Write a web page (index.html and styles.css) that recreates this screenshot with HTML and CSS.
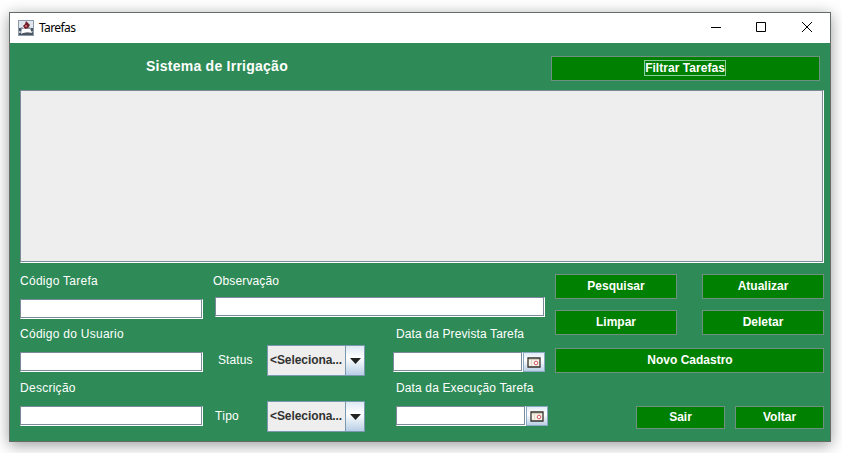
FILE: index.html
```html
<!DOCTYPE html>
<html lang="pt-BR">
<head>
<meta charset="utf-8">
<title>Tarefas</title>
<link rel="stylesheet" href="styles.css">
</head>
<body>
<div class="window">
  <header class="titlebar">
    <svg class="app-icon" width="16" height="16" viewBox="0 0 16 16">
      <rect x=".5" y=".5" width="15" height="15" fill="#dfe6ee" stroke="#8d9aaa"/>
      <path d="M1 9l3-2 2 2 5-2 4 2v3l-3 1H4l-3-2z" fill="#8a96a4"/>
      <path d="M1 8h2v3H1zM13 8h2v3h-2zM1 13l4-1 6 1 4-1v3H1z" fill="#4c5662"/>
      <path d="M4 9h8l2 4-4-1-5 1-2 1z" fill="#fff"/>
      <path d="M8 1l4 4-2 3-3 1-2-3 2-2z" fill="#70232d"/>
      <path d="M7 5h2v2H7z" fill="#c75b61"/>
    </svg>
    <span class="title">Tarefas</span>
    <svg class="controls" width="103" height="12" viewBox="0 0 103 12" fill="none" stroke="#000">
      <path d="M1 6.500h10M46.500 1.500h9v9h-9zM92 1l10 10M102 1L92 11"/>
    </svg>
  </header>
  <main class="client">
    <div class="heading">
      <h1>Sistema de Irrigação</h1>
      <button class="btn filter"><span>Filtrar Tarefas</span></button>
    </div>
    <div class="list sunken"></div>
    <div class="form">
      <div class="col codes">
        <label class="l-codigo">Código Tarefa</label>
        <input class="sunken" type="text">
        <label class="l-usuario">Código do Usuario</label>
        <input class="sunken" type="text">
        <label class="l-desc">Descrição</label>
        <input class="sunken" type="text">
      </div>
      <div class="col middle">
        <label class="l-obs">Observação</label>
        <input class="sunken obs" type="text">
        <div class="pair">
          <div class="combos">
            <div class="combo-row"><label class="l-status">Status</label>
              <div class="combo"><span>&lt;Seleciona...</span><i><svg width="11" height="6"><path d="M0 0h11L5.500 6z" fill="#222"/></svg></i></div></div>
            <div class="combo-row"><label class="l-tipo">Tipo</label>
              <div class="combo"><span>&lt;Seleciona...</span><i><svg width="11" height="6"><path d="M0 0h11L5.500 6z" fill="#222"/></svg></i></div></div>
          </div>
          <div class="dates">
            <label class="l-prev">Data da Prevista Tarefa</label>
            <div class="date"><input class="sunken" type="text"><button class="cal"><svg width="14" height="11" viewBox="0 0 14 11"><path d="M1 1h12v9H1z" fill="#f7f3e8" stroke="#35312b" stroke-width="1.300"/><path d="M2 2.500h10" stroke="#d5cdbb"/><path d="M4.500 3v6" stroke="#ded8cc"/><circle cx="9" cy="6" r="1.800" fill="#fff" stroke="#d85864"/></svg></button></div>
            <label class="l-exec">Data da Execução Tarefa</label>
            <div class="date exec"><input class="sunken" type="text"><button class="cal"><svg width="14" height="11" viewBox="0 0 14 11"><path d="M1 1h12v9H1z" fill="#f7f3e8" stroke="#35312b" stroke-width="1.300"/><path d="M2 2.500h10" stroke="#d5cdbb"/><path d="M4.500 3v6" stroke="#ded8cc"/><circle cx="9" cy="6" r="1.800" fill="#fff" stroke="#d85864"/></svg></button></div>
          </div>
        </div>
      </div>
      <div class="actions">
        <div class="row"><button class="btn half">Pesquisar</button><button class="btn half">Atualizar</button></div>
        <div class="row second"><button class="btn half">Limpar</button><button class="btn half">Deletar</button></div>
        <button class="btn novo">Novo Cadastro</button>
        <div class="row last"><button class="btn small">Sair</button><button class="btn small">Voltar</button></div>
      </div>
    </div>
  </main>
</div>
</body>
</html>
```
FILE: styles.css
```css
* { box-sizing: border-box; }
body {
  margin: 0;
  padding: 12px 0 0 9px;
  height: 453px;
  overflow: hidden;
  background: #fff;
  font: 12px/14px "Liberation Sans", Arial, sans-serif;
}
.window {
  width: 822px;
  height: 430px;
  border: 1px solid #666c68;
  background: #2e8b57;
  box-shadow: 0 3px 14px rgba(0, 0, 0, .4);
}
.titlebar {
  display: flex;
  align-items: center;
  height: 30px;
  padding: 0 17px 0 8px;
  background: #fff;
}
.app-icon { margin-top: -1px; }
.title {
  margin: 0 0 0 5px;
  font: 12px/16px "Noto Sans", "Open Sans", sans-serif;
  letter-spacing: -.6px;
  color: #000;
}
.controls { margin: -2px 0 0 auto; }
.client { padding: 0 6px 0 10px; }
.heading { display: flex; height: 47px; }
h1 {
  margin: 15px 0 0 126px;
  font-size: 14px;
  line-height: 16px;
  letter-spacing: .25px;
  color: #fff;
}
.btn {
  display: block;
  height: 25px;
  padding: 0 0 1px;
  border: 1px solid #6f8f80;
  border-radius: 0;
  background: #008000;
  color: #fff;
  font: bold 12px/14px "Liberation Sans", Arial, sans-serif;
  text-align: center;
}
.filter { width: 269px; margin: 13px 4px 0 auto; padding-right: 1px; }
.filter span { display: inline-block; outline: 1px solid #8fcca0; letter-spacing: .04px; }
.sunken {
  display: block;
  border: 1px solid #7a8a99;
  border-right-color: #fff;
  border-bottom-color: #fff;
  border-radius: 0;
  box-shadow: inset -1px -1px #7a8a99, inset 1px 1px #fff;
  background: #fff;
  padding: 0;
}
.list { height: 173px; background: #eee; box-shadow: inset -1px -1px #7a8a99; }
.form { display: flex; color: #fff; }
label { display: block; height: 14px; white-space: nowrap; }
input { width: 183px; height: 20px; }
.codes { width: 193px; padding-top: 11px; letter-spacing: .27px; }
.codes .sunken { margin-top: 11px; }
.l-usuario { margin-top: 8px; }
.l-desc { margin-top: 9px; }
.middle { width: 342px; padding-top: 11px; }
.l-obs { letter-spacing: .14px; }
.obs { width: 330px; margin: 9px 0 0 2px; }
.pair { display: flex; }
.combos { width: 180px; padding-top: 28px; }
.combo-row { display: flex; align-items: center; height: 31px; margin-bottom: 25px; }
.l-status, .l-tipo { width: 54px; margin-top: -2px; letter-spacing: .1px; }
.l-status { padding-left: 5px; }
.l-tipo { padding-left: 2px; letter-spacing: .3px; }
.combo {
  display: flex;
  width: 98px;
  height: 31px;
  border: 1px solid #7a98af;
  background: #eee;
  color: #333;
  font-weight: bold;
  letter-spacing: -.08px;
}
.combo span { width: 77px; padding-left: 2px; line-height: 29px; white-space: nowrap; }
.combo i {
  display: flex;
  flex: 1;
  align-items: center;
  justify-content: center;
  border-left: 1px solid #7a98af;
  background: linear-gradient(#dde8f3, #fff 40%, #b8cfe5);
}
.dates { padding-top: 10px; letter-spacing: .13px; }
.l-prev, .l-exec { margin-left: 3px; }
.l-exec { margin-top: 9px; }
.date { display: flex; margin-top: 11px; }
.exec { margin-left: 3px; }
.date input { width: 130px; }
.cal {
  display: flex;
  align-items: center;
  justify-content: center;
  width: 22px;
  height: 20px;
  padding: 0;
  border: 1px solid #8aa8c2;
  background: linear-gradient(#e3ecf5, #fff 40%, #b8cfe5);
}
.actions { width: 269px; padding-top: 11px; }
.row { display: flex; justify-content: space-between; }
.second { margin-top: 11px; }
.half { width: 122px; }
.novo { width: 100%; margin-top: 13px; padding-left: 1px; }
.last { justify-content: flex-end; gap: 10px; margin-top: 33px; }
.small { width: 89px; height: 23px; }
```
